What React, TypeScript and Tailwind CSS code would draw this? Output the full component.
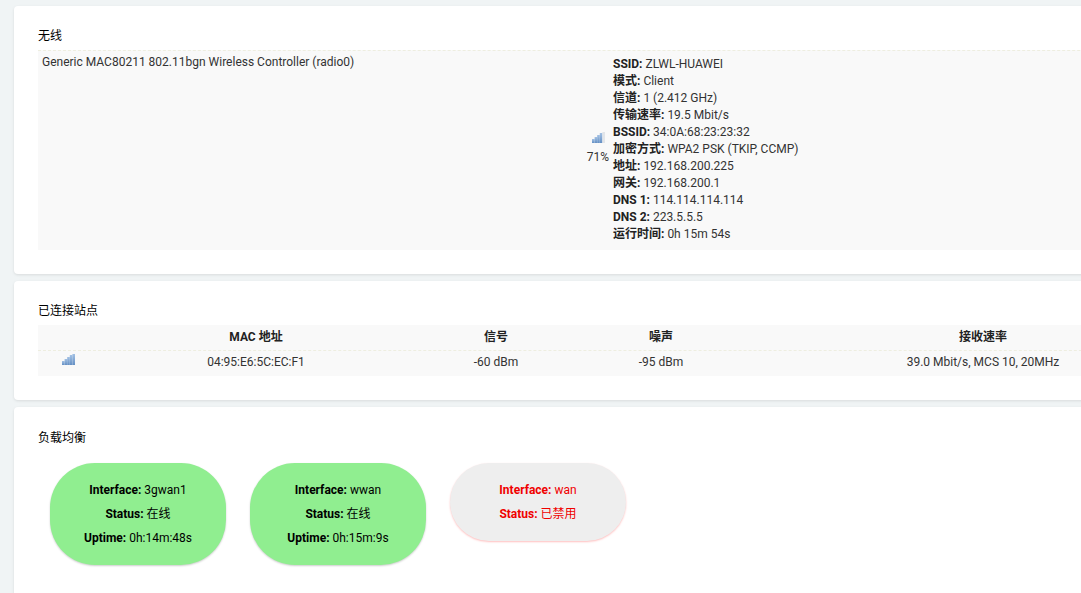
const SignalIcon = ({ level }: { level: number }) => {
  const bars = [
    { x: 0, y: 7, h: 4 },
    { x: 2.6, y: 5, h: 6 },
    { x: 5.2, y: 3, h: 8 },
    { x: 7.8, y: 1, h: 10 },
    { x: 10.4, y: 0, h: 11 },
  ];
  return (
    <svg width="13" height="11" viewBox="0 0 13 11">
      <defs>
        <linearGradient id="sig" x1="0" y1="0" x2="0" y2="1">
          <stop offset="0" stopColor="#a3c1e4" />
          <stop offset="1" stopColor="#6590c4" />
        </linearGradient>
      </defs>
      {bars.map((b, i) => (
        <rect key={b.x} x={b.x} y={b.y} width="2.6" height={b.h} fill={i < level ? "url(#sig)" : "#e2e5e9"} />
      ))}
    </svg>
  );
};

const Card = ({ title, children, className }: { title: string; children: React.ReactNode; className: string }) => (
  <section className={"rounded-[4px] bg-white px-6 shadow-[0_1px_3px_rgba(0,0,0,0.1)] " + className}>
    <h3 className="mb-1 h-5 text-[12px] leading-5 text-black">{title}</h3>
    {children}
  </section>
);

const wifiInfo = [
  ["SSID:", "ZLWL-HUAWEI"],
  ["模式:", "Client"],
  ["信道:", "1 (2.412 GHz)"],
  ["传输速率:", "19.5 Mbit/s"],
  ["BSSID:", "34:0A:68:23:23:32"],
  ["加密方式:", "WPA2 PSK (TKIP, CCMP)"],
  ["地址:", "192.168.200.225"],
  ["网关:", "192.168.200.1"],
  ["DNS 1:", "114.114.114.114"],
  ["DNS 2:", "223.5.5.5"],
  ["运行时间:", "0h 15m 54s"],
];

const pills = [
  { rows: [["Interface:", "3gwan1"], ["Status:", "在线"], ["Uptime:", "0h:14m:48s"]], off: false },
  { rows: [["Interface:", "wwan"], ["Status:", "在线"], ["Uptime:", "0h:15m:9s"]], off: false },
  { rows: [["Interface:", "wan"], ["Status:", "已禁用"]], off: true },
];

export default function App() {
  return (
    <div className="h-[593px] w-[1081px] overflow-hidden bg-[#f0f4f5] pl-[14px] pt-[6px] text-[12px] text-[#333] [font-family:Roboto,'Noto_Sans_CJK_SC',sans-serif]">
      <div className="flex w-[1240px] flex-col gap-[7px]">
        <Card title="无线" className="h-[268px] pt-5">
          <div className="flex h-[200px] border-t border-dashed border-[#eeeee0] bg-[#f9f9f9]">
            <div className="w-[548px] px-1 pt-[3px] leading-[17px]">Generic MAC80211 802.11bgn Wireless Controller (radio0)</div>
            <div className="flex w-[27px] flex-col items-center pr-[3px] pt-[81px]">
              <SignalIcon level={4} />
              <span className="mt-[6px] leading-[17px]">71%</span>
            </div>
            <div className="pt-[5px] leading-[17px]">
              {wifiInfo.map(([k, v]) => (
                <div key={k}>
                  <b className="font-bold text-[#222]">{k}</b> {v}
                </div>
              ))}
            </div>
          </div>
        </Card>

        <Card title="已连接站点" className="h-[119px] pt-5">
          <div className="grid grid-cols-[60px_316px_164px_166px_478px] bg-[#f9f9f9] text-center">
            <div className="h-[25px]" />
            <div className="font-bold leading-[25px] text-[#222]">MAC 地址</div>
            <div className="font-bold leading-[25px] text-[#222]">信号</div>
            <div className="font-bold leading-[25px] text-[#222]">噪声</div>
            <div className="font-bold leading-[25px] text-[#222]">接收速率</div>
            <div className="col-span-5 border-t border-dashed border-[#eeeee0]" />
            <div className="flex h-[25px] justify-center pt-[3px]">
              <SignalIcon level={5} />
            </div>
            <div className="leading-[23px]">04:95:E6:5C:EC:F1</div>
            <div className="leading-[23px]">-60 dBm</div>
            <div className="leading-[23px]">-95 dBm</div>
            <div className="leading-[23px]">39.0 Mbit/s, MCS 10, 20MHz</div>
          </div>
        </Card>

        <Card title="负载均衡" className="h-[200px] pt-[21px]">
          <div className="mt-[15px] flex items-start gap-6 pl-3">
            {pills.map((p) => (
              <div
                key={p.rows[0][1]}
                className={
                  p.off
                    ? "w-[176px] rounded-[39px] bg-[#eeeeee] py-[15px] text-center leading-6 text-[#f00000] shadow-[0_1px_2px_rgba(255,0,0,0.25)]"
                    : "w-[176px] rounded-[45px] bg-[#90ee90] py-[15px] text-center leading-6 text-black shadow-[0_1px_2px_rgba(0,0,0,0.2)]"
                }
              >
                {p.rows.map(([k, v]) => (
                  <div key={k}>
                    <b className="font-bold">{k}</b> {v}
                  </div>
                ))}
              </div>
            ))}
          </div>
        </Card>
      </div>
    </div>
  );
}
